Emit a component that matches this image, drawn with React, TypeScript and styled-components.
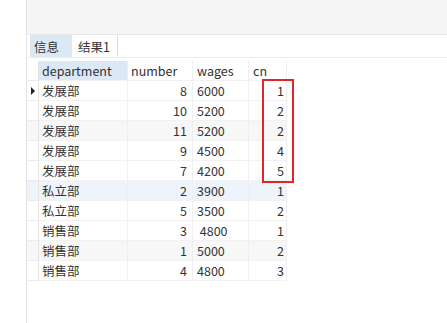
import React from "react";
import styled, { createGlobalStyle } from "styled-components";

const Global = createGlobalStyle`
  html, body { margin: 0; padding: 0; background: #ffffff; }
  body { font-family: "Noto Sans CJK SC", "Noto Sans", sans-serif; color: #333; }
`;

const Page = styled.div`
  display: flex;
  width: 447px;
  height: 323px;
  overflow: hidden;
`;

const LeftStrip = styled.div`
  width: 26px;
  flex: none;
  background: #ffffff;
`;

const Main = styled.div`
  flex: 1;
  display: flex;
  flex-direction: column;
  border-left: 1px solid #e4e4e4;
`;

const TopArea = styled.div`
  height: 34px;
  background: #f5f5f5;
  border-bottom: 1px solid #e6e6e6;
`;

const TabBar = styled.div`
  height: 22px;
  display: flex;
  padding-left: 3px;
  border-bottom: 1px solid #ececec;
  background: #ffffff;
`;

const Tab = styled.div<{ $active?: boolean }>`
  display: flex;
  align-items: center;
  box-sizing: border-box;
  padding-left: ${(p) => (p.$active ? "6px" : "4px")};
  width: ${(p) => (p.$active ? "46px" : "42px")};
  font-size: 12.5px;
  color: #333;
  background: ${(p) => (p.$active ? "#ffffff" : "#dde8f5")};
  border-right: ${(p) => (p.$active ? "1px solid #dcdcdc" : "none")};
`;

const GridWrap = styled.div`
  position: relative;
  padding-top: 3px;
  flex: 1;
`;

const Grid = styled.div`
  display: grid;
  grid-template-columns: 12px 89px 65px 56px 38px;
  grid-auto-rows: 20px;
  width: 260px;
`;

const Cell = styled.div<{ $align?: "left" | "right"; $bg?: string; $pl?: number; $pr?: number }>`
  display: flex;
  align-items: center;
  justify-content: ${(p) => (p.$align === "right" ? "flex-end" : "flex-start")};
  padding-left: ${(p) => p.$pl ?? 3}px;
  padding-right: ${(p) => p.$pr ?? 0}px;
  font-size: 12.5px;
  color: #333;
  white-space: pre;
  background: ${(p) => p.$bg ?? "transparent"};
  border-right: 1px solid #efefef;
  border-bottom: 1px solid #f2f2f2;
  box-sizing: border-box;
`;

const Indicator = styled.div<{ $bg?: string }>`
  display: flex;
  align-items: center;
  justify-content: center;
  border-right: 1px solid #e4e4e4;
  border-bottom: 1px solid #ececec;
  background: ${(p) => p.$bg ?? "transparent"};
  box-sizing: border-box;
`;

const Arrow = styled.div`
  width: 0;
  height: 0;
  border-top: 4px solid transparent;
  border-bottom: 4px solid transparent;
  border-left: 4px solid #222;
  margin-left: 1px;
`;

const Highlight = styled.div`
  position: absolute;
  left: 235px;
  top: 21px;
  width: 32px;
  height: 104px;
  border: 2px solid #e0262b;
  box-sizing: border-box;
`;

const rows: [string, string, string, string][] = [
  ["发展部", "8", "6000", "1"],
  ["发展部", "10", "5200", "2"],
  ["发展部", "11", "5200", "2"],
  ["发展部", "9", "4500", "4"],
  ["发展部", "7", "4200", "5"],
  ["私立部", "2", "3900", "1"],
  ["私立部", "5", "3500", "2"],
  ["销售部", "3", " 4800", "1"],
  ["销售部", "1", "5000", "2"],
  ["销售部", "4", "4800", "3"],
];

const rowBg = (i: number) => (i === 5 ? "#eef4fb" : i === 2 || i === 8 ? "#f7f7f7" : "transparent");

export default function App() {
  return (
    <>
      <Global />
      <Page>
        <LeftStrip />
        <Main>
          <TopArea />
          <TabBar>
            <Tab>信息</Tab>
            <Tab $active>结果1</Tab>
          </TabBar>
          <GridWrap>
            <Grid>
              <Indicator />
              <Cell $bg="#dce8f5">department</Cell>
              <Cell>number</Cell>
              <Cell $pl={4}>wages</Cell>
              <Cell $pl={4}>cn</Cell>
              {rows.map((r, i) => (
                <React.Fragment key={i}>
                  <Indicator $bg={rowBg(i)}>{i === 0 ? <Arrow /> : null}</Indicator>
                  <Cell $bg={rowBg(i)}>{r[0]}</Cell>
                  <Cell $bg={rowBg(i)} $align="right" $pr={5}>{r[1]}</Cell>
                  <Cell $bg={rowBg(i)} $pl={4}>{r[2]}</Cell>
                  <Cell $bg={rowBg(i)} $align="right" $pr={2}>{r[3]}</Cell>
                </React.Fragment>
              ))}
            </Grid>
            <Highlight />
          </GridWrap>
        </Main>
      </Page>
    </>
  );
}
